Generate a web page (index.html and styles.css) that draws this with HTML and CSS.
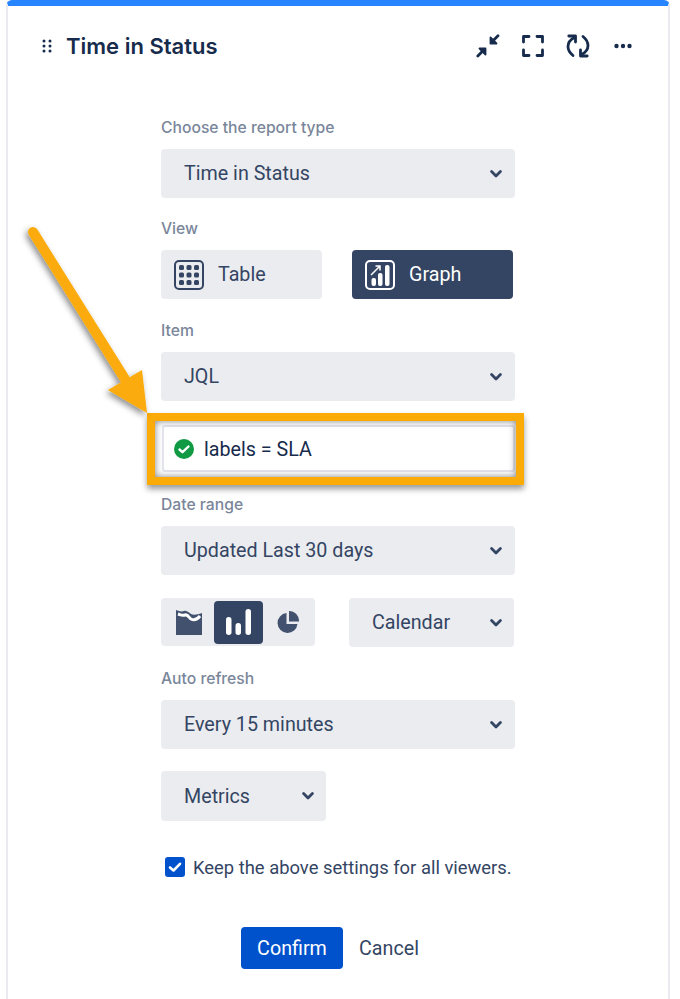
FILE: index.html
```html
<!DOCTYPE html>
<html lang="en">
<head>
<meta charset="utf-8">
<title>Time in Status</title>
<link rel="stylesheet" href="styles.css">
</head>
<body>
<svg width="0" height="0" class="defs"><defs>
<symbol id="chev" viewBox="0 0 12 8"><path d="M1.600 1.600 6 6l4.400-4.400" fill="none" stroke="currentColor" stroke-width="2.800" stroke-linecap="round" stroke-linejoin="round"/></symbol>
</defs></svg>
<main class="card">
  <header class="head">
    <svg class="grip" width="10" height="14" viewBox="0 0 10 14"><g fill="#172b4d"><circle cx="2" cy="2" r="1.500"/><circle cx="8" cy="2" r="1.500"/><circle cx="2" cy="7" r="1.500"/><circle cx="8" cy="7" r="1.500"/><circle cx="2" cy="12" r="1.500"/><circle cx="8" cy="12" r="1.500"/></g></svg>
    <h1 class="title">Time in Status</h1>
    <div class="tools">
      <svg width="24" height="24" viewBox="0 0 24 24" fill="none" stroke="#172b4d" stroke-width="2.800" stroke-linecap="round" stroke-linejoin="round"><path d="M1.800 22 8 15.800"/><path d="M3.500 14.500h6v6z" fill="#172b4d" stroke-width="1.800"/><path d="M22 1.800 15.800 8"/><path d="M20.500 9.500h-6v-6z" fill="#172b4d" stroke-width="1.800"/></svg>
      <svg width="24" height="24" viewBox="0 0 24 24" fill="none" stroke="#172b4d" stroke-width="2.800" stroke-linecap="round" stroke-linejoin="round"><path d="M8 2.500H2.500V8M16 2.500h5.500V8M8 21.500H2.500V16M16 21.500h5.500V16"/></svg>
      <svg width="24" height="24" viewBox="0 0 24 24" fill="none" stroke="#172b4d" stroke-width="2.800" stroke-linecap="round" stroke-linejoin="round"><path d="M8.500 3.500C4.500 5.500 2 8.500 2 12.500c0 3.500 2 6.500 5 9"/><path d="M2.800 2h6.700v6"/><path d="M15.500 20.500c4-2 6.500-5 6.500-9 0-3.500-2-6.500-5-9"/><path d="M21.200 22h-6.700v-6"/></svg>
      <svg width="18" height="24" viewBox="0 0 18 24" fill="#172b4d"><circle cx="2.500" cy="12" r="2.200"/><circle cx="9" cy="12" r="2.200"/><circle cx="15.500" cy="12" r="2.200"/></svg>
    </div>
  </header>

  <form class="form">
    <div class="label">Choose the report type</div>
    <div class="select"><span>Time in Status</span><svg class="chev"><use href="#chev"/></svg></div>

    <div class="label gap-sm">View</div>
    <div class="views">
      <div class="view">
        <svg width="30" height="30" viewBox="0 0 30 30"><rect x="1" y="1" width="28" height="28" rx="4" fill="none" stroke="currentColor" stroke-width="2"/><g fill="currentColor"><rect x="5" y="5" width="5" height="5" rx="1.500"/><rect x="12.500" y="5" width="5" height="5" rx="1.500"/><rect x="20" y="5" width="5" height="5" rx="1.500"/><rect x="5" y="12.500" width="5" height="5" rx="1.500"/><rect x="12.500" y="12.500" width="5" height="5" rx="1.500"/><rect x="20" y="12.500" width="5" height="5" rx="1.500"/><rect x="5" y="20" width="5" height="5" rx="1.500"/><rect x="12.500" y="20" width="5" height="5" rx="1.500"/><rect x="20" y="20" width="5" height="5" rx="1.500"/></g></svg>
        <span>Table</span>
      </div>
      <div class="view view-on">
        <svg width="30" height="30" viewBox="0 0 30 30"><rect x="1" y="1" width="28" height="28" rx="4" fill="none" stroke="currentColor" stroke-width="2"/><g fill="currentColor"><rect x="6.500" y="18" width="4.500" height="8" rx="2"/><rect x="13" y="13" width="4.500" height="13" rx="2"/><rect x="20" y="5" width="4.500" height="21" rx="2"/></g><path d="M6 15 14.500 6.500M10.500 6H15V10.500" fill="none" stroke="currentColor" stroke-width="1.500"/></svg>
        <span>Graph</span>
      </div>
    </div>

    <div class="label gap-lg">Item</div>
    <div class="select"><span>JQL</span><svg class="chev"><use href="#chev"/></svg></div>

    <div class="jql">
      <svg width="20" height="20" viewBox="0 0 20 20"><circle cx="10" cy="10" r="10" fill="#109a43"/><path d="M5.500 10.500 8.500 13.200 14.500 7.500" fill="none" stroke="#fff" stroke-width="2.400" stroke-linecap="round" stroke-linejoin="round"/></svg>
      <span>labels = SLA</span>
    </div>

    <div class="label gap-md">Date range</div>
    <div class="select"><span>Updated Last 30 days</span><svg class="chev"><use href="#chev"/></svg></div>

    <div class="chart-row">
      <div class="charts">
        <div class="chart-plain">
          <svg width="26" height="25" viewBox="0 0 26 25"><path d="M0 0c3 1 5 2 8 1s5 2 7 3 6 1 11-1v22H0z" fill="#42526e"/><path d="M2 4c3 1 4 2 7 1s4 3 6 4 5 2 9-3" fill="none" stroke="#fff" stroke-width="3"/></svg>
        </div>
        <div class="chart-on">
          <svg width="25" height="26" viewBox="0 0 25 26" fill="#fff"><rect x="0" y="8" width="5.500" height="18" rx="2.700"/><rect x="9.500" y="14" width="5.500" height="12" rx="2.700"/><rect x="19.500" y="0" width="5.500" height="26" rx="2.700"/></svg>
        </div>
        <div class="chart-plain chart-pie">
          <svg width="22" height="22" viewBox="0 0 22 22" fill="#42526e"><path d="M9.500 2A10 10 0 1 0 20.500 13H9.500z"/><path d="M12 0a10 10 0 0 1 10 10.500H12z"/></svg>
        </div>
      </div>
      <div class="select select-cal"><span>Calendar</span><svg class="chev"><use href="#chev"/></svg></div>
    </div>

    <div class="label gap-lg">Auto refresh</div>
    <div class="select"><span>Every 15 minutes</span><svg class="chev"><use href="#chev"/></svg></div>

    <div class="select select-metrics"><span>Metrics</span><svg class="chev"><use href="#chev"/></svg></div>

    <div class="keep">
      <svg width="20" height="20" viewBox="0 0 20 20"><rect width="20" height="20" rx="3" fill="#0052cc"/><path d="M5 10.500 8.500 13.500 15 6.800" fill="none" stroke="#fff" stroke-width="2.600" stroke-linecap="round" stroke-linejoin="round"/></svg>
      <span>Keep the above settings for all viewers.</span>
    </div>

    <div class="actions">
      <div class="confirm">Confirm</div>
      <div class="cancel">Cancel</div>
    </div>
  </form>

  <div class="highlight"></div>
  <svg class="arrow" width="150" height="420" viewBox="0 0 150 420">
    <defs><filter id="ds" x="-30%" y="-10%" width="160%" height="120%"><feDropShadow dx="-2" dy="3" stdDeviation="3" flood-color="#000" flood-opacity=".45"/></filter></defs>
    <g filter="url(#ds)"><path d="M33 232 128 384" fill="none" stroke="#fbab08" stroke-width="10" stroke-linecap="round"/><path d="M142 370 147 413 108 390z" fill="#fbab08"/></g>
  </svg>
</main>
</body>
</html>
```

FILE: styles.css
```css
* { box-sizing: border-box; }
html, body { margin: 0; padding: 0; background: #fff; }
body { width: 680px; height: 999px; overflow: hidden; font-family: Roboto, "Liberation Sans", sans-serif; color: #344563; }
.defs { position: absolute; }

.card {
  position: relative;
  width: 664px;
  height: 999px;
  margin-left: 6px;
  background: #fff;
  border-left: 2px solid #e9ebf0;
  border-right: 2px solid #e9ebf0;
  border-top: 6px solid #2684ff;
  border-radius: 6px 6px 0 0;
}

.head { display: flex; align-items: center; height: 80px; padding: 0 36px 0 34px; }
.grip { flex: none; }
.title { margin: 0 0 0 14px; font: 600 22px/28px Inter, Roboto, sans-serif; color: #172b4d; white-space: nowrap; }
.tools { margin-left: auto; display: flex; align-items: center; gap: 21px; }
.tools svg:last-child { margin-left: 3px; }

.form { width: 354px; margin-left: 153px; padding-top: 32px; }
.label { height: 20px; margin-bottom: 11px; font: 500 15.700px/20px Inter, Roboto, sans-serif; color: #7a869a; }
.gap-sm { margin-top: 21px; }
.gap-lg { margin-top: 22px; }
.gap-md { margin-top: 23px; }

.select {
  display: flex;
  align-items: center;
  justify-content: space-between;
  height: 49px;
  padding: 0 13px 0 23px;
  background: #ebecf0;
  border-radius: 4px;
  font-size: 19.700px;
  color: #344563;
}
.chev { width: 12px; height: 8px; color: #344563; flex: none; }

.views { display: flex; gap: 30px; }
.view {
  display: flex;
  align-items: center;
  gap: 14px;
  width: 161px;
  height: 49px;
  padding-left: 13px;
  background: #ebecf0;
  border-radius: 4px;
  font-size: 19.700px;
  color: #344563;
}
.view-on { background: #344563; color: #fff; }

.jql {
  display: flex;
  align-items: center;
  gap: 10px;
  height: 47px;
  width: 353px;
  margin: 24px 0 0 1px;
  padding: 1px 0 0 10px;
  background: #fff;
  border: 2px solid #e4e5ec;
  border-radius: 3px;
  font-size: 19.700px;
  color: #172b4d;
}

.chart-row { display: flex; justify-content: space-between; align-items: flex-start; width: 353px; margin-top: 23px; }
.charts { display: flex; align-items: center; gap: 12px; width: 154px; height: 48px; padding-left: 15px; background: #ebecf0; border-radius: 4px; }
.chart-plain { display: flex; align-items: center; }
.chart-pie { margin-left: 2px; }
.chart-on { display: flex; align-items: center; justify-content: center; width: 49px; height: 43px; background: #344563; border-radius: 4px; }
.select-cal { width: 165px; padding-right: 12px; }
.select-metrics { width: 165px; height: 50px; margin-top: 22px; padding-right: 12px; }

.keep { display: flex; align-items: center; gap: 8px; height: 24px; margin: 34px 0 0 4px; font-size: 18.400px; color: #344563; white-space: nowrap; }
.keep svg { flex: none; }
.actions { display: flex; align-items: center; gap: 16px; margin: 48px 0 0 80px; }
.confirm { display: flex; align-items: center; justify-content: center; width: 102px; height: 42px; background: #0052cc; border-radius: 4px; color: #fff; font-size: 19.700px; }
.cancel { font-size: 19.700px; color: #344563; }

.highlight {
  position: absolute;
  left: 139px;
  top: 407px;
  width: 377px;
  height: 72px;
  border: 8px solid #fbab08;
  box-shadow: 0 4px 6px rgba(0,0,0,.4), inset 0 0 7px rgba(0,0,0,.5);
}
.arrow { position: absolute; left: -8px; top: -6px; overflow: visible; pointer-events: none; }
```
